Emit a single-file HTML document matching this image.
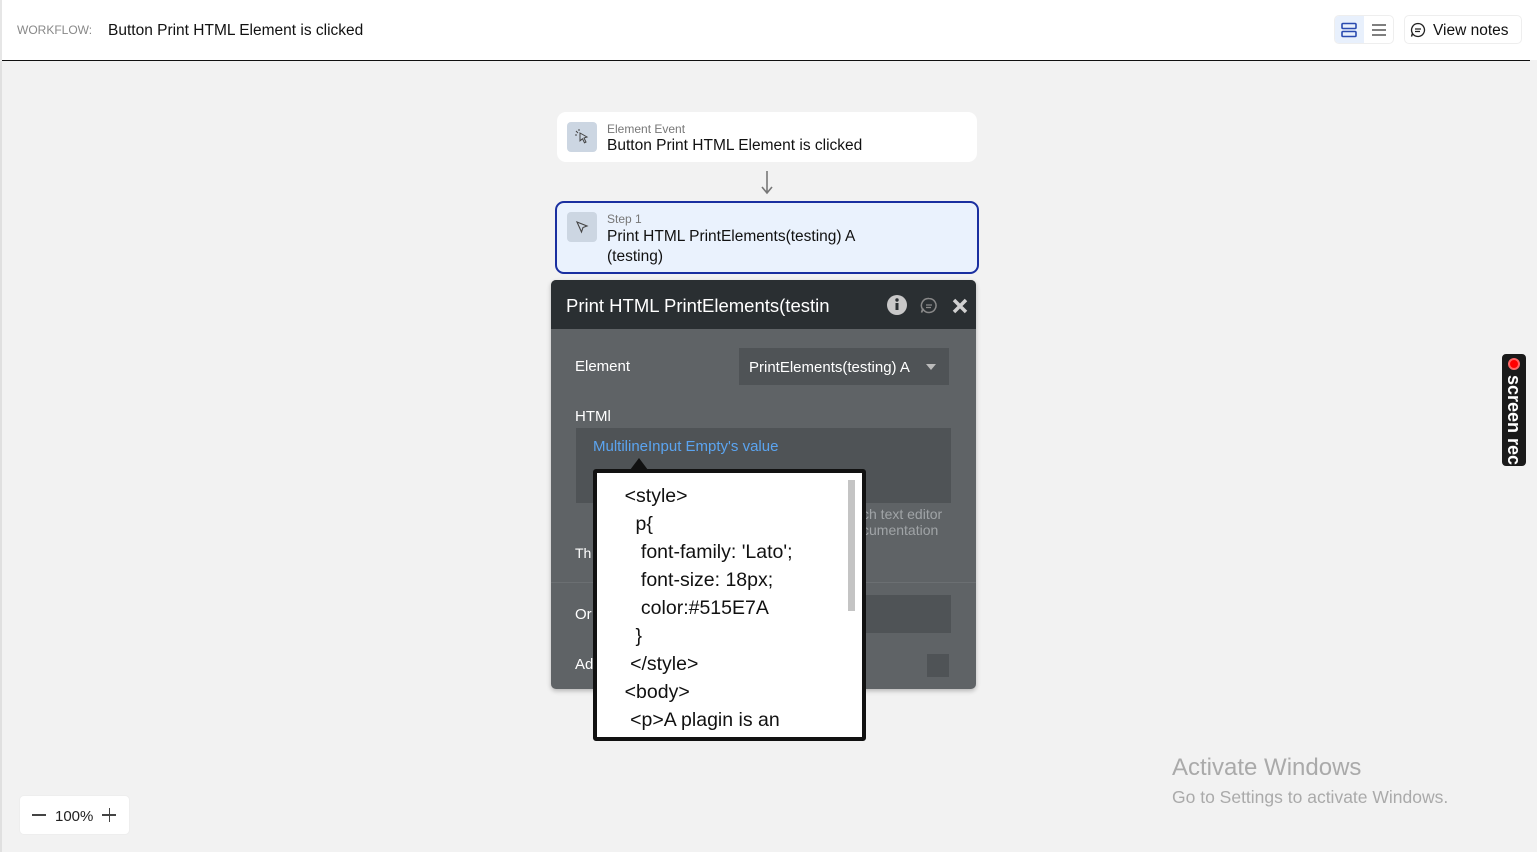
<!DOCTYPE html>
<html><head><meta charset="utf-8"><style>
*{box-sizing:border-box;margin:0;padding:0}
body{width:1537px;height:852px;background:#f2f2f2;font-family:"Liberation Sans",sans-serif;position:relative;overflow:hidden;color:#1a1a1a}
.a{position:absolute}
</style></head><body>
<div class="a" style="left:0;top:0;width:1537px;height:60px;background:#fff;border-left:2px solid #e6e6e6"></div>
<div class="a" style="left:2px;top:60px;width:1528px;height:1px;background:#111"></div>
<div class="a" style="left:0;top:61px;width:2px;height:791px;background:#e0e0e0"></div>
<div class="a" style="left:17px;top:23px;font-size:12px;color:#888">WORKFLOW:</div>
<div class="a" style="left:108px;top:22px;font-size:15.5px;color:#111">Button Print HTML Element is clicked</div>
<div class="a" style="left:1334px;top:15px;width:60px;height:29px;border:1px solid #eee;border-radius:5px;background:#fff"></div>
<div class="a" style="left:1335px;top:16px;width:29px;height:27px;background:#e8f0fc;border-radius:4px 0 0 4px"></div>
<svg class="a" style="left:1340px;top:22px" width="18" height="16"><rect x="2" y="1.5" width="14" height="5" rx="1" fill="none" stroke="#2a4bb0" stroke-width="1.6"/><rect x="2" y="9.5" width="14" height="5" rx="1" fill="none" stroke="#2a4bb0" stroke-width="1.6"/></svg>
<svg class="a" style="left:1370px;top:22px" width="18" height="16"><path d="M2 3h14M2 8h14M2 13h14" stroke="#555" stroke-width="1.4"/></svg>
<div class="a" style="left:1404px;top:15px;width:118px;height:29px;border:1px solid #eee;border-radius:5px;background:#fff"></div>
<svg class="a" style="left:1410px;top:22px" width="16" height="16"><path d="M8 1.5a6.5 6.5 0 1 1-5.3 10.3L1.5 14.5l.9-3.3A6.5 6.5 0 0 1 8 1.5z" fill="none" stroke="#222" stroke-width="1.3"/><path d="M5 7h6M5 9.5h5" stroke="#222" stroke-width="1.2"/></svg>
<div class="a" style="left:1433px;top:22px;font-size:15.5px;color:#111">View notes</div>

<div class="a" style="left:557px;top:112px;width:420px;height:50px;background:#fff;border-radius:9px"></div>
<div class="a" style="left:567px;top:122px;width:30px;height:30px;background:#ccd6e2;border-radius:4px"></div>
<svg class="a" style="left:573px;top:128px" width="18" height="18"><path d="M7 5l7 4-3 1 2 4-1.5.8-2-4-2.5 2z" fill="none" stroke="#444" stroke-width="1"/><path d="M3 3l2 2M2 7h2M6 1v2" stroke="#444" stroke-width="1"/></svg>
<div class="a" style="left:607px;top:122px;font-size:12px;color:#777">Element Event</div>
<div class="a" style="left:607px;top:137px;font-size:15.5px;color:#111">Button Print HTML Element is clicked</div>
<svg class="a" style="left:760px;top:170px" width="14" height="26"><path d="M7 1v21M2 17l5 6 5-6" fill="none" stroke="#777" stroke-width="1.6"/></svg>
<div class="a" style="left:555px;top:201px;width:424px;height:73px;background:#eaf2fd;border:2px solid #1a2fa0;border-radius:9px"></div>
<div class="a" style="left:567px;top:212px;width:30px;height:30px;background:#ccd6e2;border-radius:4px"></div>
<svg class="a" style="left:574px;top:219px" width="16" height="16"><path d="M3 3l10 4-4 1.5L7.5 13z" fill="none" stroke="#444" stroke-width="1.1"/></svg>
<div class="a" style="left:607px;top:212px;font-size:12px;color:#777">Step 1</div>
<div class="a" style="left:607px;top:227px;font-size:15.5px;color:#111;line-height:20px">Print HTML PrintElements(testing) A<br>(testing)</div>

<div class="a" style="left:551px;top:280px;width:425px;height:409px;background:#5f6366;border-radius:5px;box-shadow:0 2px 5px rgba(0,0,0,.25)"></div>
<div class="a" style="left:551px;top:280px;width:425px;height:49px;background:#2a2f32;border-radius:5px 5px 0 0"></div>
<div class="a" style="left:566px;top:295px;font-size:18.5px;color:#fff">Print HTML PrintElements(testin</div>
<svg class="a" style="left:887px;top:295px" width="20" height="20"><circle cx="10" cy="10" r="10" fill="#c8c8c8"/><rect x="8.5" y="8" width="3" height="7" fill="#2a2f32"/><circle cx="10" cy="5" r="1.7" fill="#2a2f32"/></svg>
<svg class="a" style="left:920px;top:297px" width="18" height="17"><path d="M9 1.5a7 7 0 1 1-5.8 10.9L1.5 15.5l1-3.3A7 7 0 0 1 9 1.5z" fill="none" stroke="#888" stroke-width="1.5"/><path d="M6 8h6M6 10.5h5" stroke="#888" stroke-width="1.3"/></svg>
<svg class="a" style="left:951px;top:297px" width="18" height="18"><path d="M3 3l12 12M15 3L3 15" stroke="#d0d0d0" stroke-width="3.5"/></svg>
<div class="a" style="left:575px;top:358px;font-size:15px;color:#fff">Element</div>
<div class="a" style="left:739px;top:348px;width:210px;height:37px;background:#4f5356"></div>
<div class="a" style="left:749px;top:359px;font-size:15px;color:#fff">PrintElements(testing) A</div>
<div class="a" style="left:926px;top:364px;border:5px solid transparent;border-top:6px solid #bbb"></div>
<div class="a" style="left:575px;top:408px;font-size:15px;color:#fff">HTMl</div>
<div class="a" style="left:576px;top:428px;width:375px;height:75px;background:#4f5356"></div>
<div class="a" style="left:593px;top:438px;font-size:15px;color:#5ba4f0">MultilineInput Empty's value</div>
<div class="a" style="left:862px;top:506px;font-size:14px;color:#a0a4a7;line-height:16px">ch text editor<br>cumentation</div>
<div class="a" style="left:575px;top:545px;font-size:14px;color:#fff">Th</div>
<div class="a" style="left:551px;top:582px;width:425px;height:1px;background:#6b6f72"></div>
<div class="a" style="left:575px;top:606px;font-size:15px;color:#fff">Or</div>
<div class="a" style="left:866px;top:595px;width:85px;height:38px;background:#4f5356"></div>
<div class="a" style="left:575px;top:656px;font-size:15px;color:#fff">Ad</div>
<div class="a" style="left:927px;top:654px;width:22px;height:23px;background:#4f5356"></div>

<div class="a" style="left:630px;top:458px;border:9px solid transparent;border-bottom:12px solid #111;border-top:0"></div>
<div class="a" style="left:593px;top:469px;width:273px;height:272px;background:#fff;border:4px solid #111;border-radius:3px"></div>
<div class="a" style="left:848px;top:480px;width:7px;height:131px;background:#c4c4c4"></div>
<div class="a" style="left:603px;top:482px;font-size:19.5px;color:#111;line-height:28px;white-space:pre">    &lt;style&gt;
      p{
       font-family: 'Lato';
       font-size: 18px;
       color:#515E7A
      }
     &lt;/style&gt;
    &lt;body&gt;
     &lt;p&gt;A plagin is an</div>

<div class="a" style="left:1502px;top:354px;width:24px;height:112px;background:#1a1a1a;border-radius:4px"></div>
<div class="a" style="left:1508px;top:358px;width:12px;height:12px;border-radius:50%;background:#f00;border:2px solid #f66"></div>
<div class="a" style="left:1503px;top:375px;width:22px;height:92px;writing-mode:vertical-rl;color:#fff;font-size:18px;line-height:22px;font-weight:bold">screen rec</div>

<div class="a" style="left:1172px;top:754px;font-size:24px;color:#aaa">Activate Windows</div>
<div class="a" style="left:1172px;top:787px;font-size:17.5px;color:#aaa">Go to Settings to activate Windows.</div>

<div class="a" style="left:19px;top:795px;width:111px;height:40px;background:#fff;border-radius:5px;border:1px solid #eee"></div>
<div class="a" style="left:32px;top:814px;width:14px;height:1.5px;background:#444"></div>
<div class="a" style="left:55px;top:808px;font-size:15px;color:#222">100%</div>
<div class="a" style="left:102px;top:814px;width:14px;height:1.5px;background:#444"></div>
<div class="a" style="left:108.5px;top:808px;width:1.5px;height:14px;background:#444"></div>
</body></html>
